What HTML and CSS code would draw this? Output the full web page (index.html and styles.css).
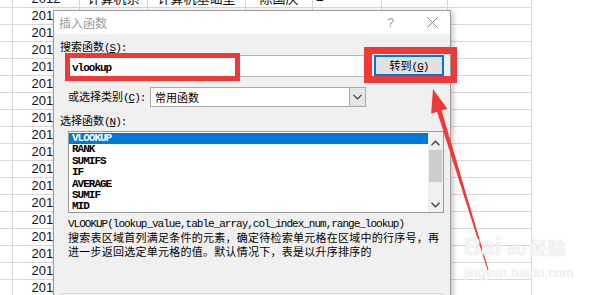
FILE: index.html
```html
<!DOCTYPE html>
<html lang="zh-CN">
<head>
<meta charset="UTF-8">
<title>插入函数</title>
<link rel="stylesheet" href="styles.css">
</head>
<body>

<div class="sheet">
    <div class="row"><span class="c0"></span><span class="c1">2012</span><span class="c2">计算机系</span><span class="c3">计算机基础室</span><span class="c4">陈国庆</span><span class="c5 left">=</span><span class="c6"></span><span class="c7"></span></div>
    <div class="row"><span class="c0"></span><span class="c1">2012</span><span class="c2"></span><span class="c3"></span><span class="c4"></span><span class="c5"></span><span class="c6"></span><span class="c7"></span></div>
    <div class="row"><span class="c0"></span><span class="c1">2012</span><span class="c2"></span><span class="c3"></span><span class="c4"></span><span class="c5"></span><span class="c6"></span><span class="c7"></span></div>
    <div class="row"><span class="c0"></span><span class="c1">2012</span><span class="c2"></span><span class="c3"></span><span class="c4"></span><span class="c5"></span><span class="c6"></span><span class="c7"></span></div>
    <div class="row"><span class="c0"></span><span class="c1">2012</span><span class="c2"></span><span class="c3"></span><span class="c4"></span><span class="c5"></span><span class="c6"></span><span class="c7"></span></div>
    <div class="row"><span class="c0"></span><span class="c1">2012</span><span class="c2"></span><span class="c3"></span><span class="c4"></span><span class="c5"></span><span class="c6"></span><span class="c7"></span></div>
    <div class="row"><span class="c0"></span><span class="c1">2012</span><span class="c2"></span><span class="c3"></span><span class="c4"></span><span class="c5"></span><span class="c6"></span><span class="c7"></span></div>
    <div class="row"><span class="c0"></span><span class="c1">2012</span><span class="c2"></span><span class="c3"></span><span class="c4"></span><span class="c5"></span><span class="c6"></span><span class="c7"></span></div>
    <div class="row"><span class="c0"></span><span class="c1">2012</span><span class="c2"></span><span class="c3"></span><span class="c4"></span><span class="c5"></span><span class="c6"></span><span class="c7"></span></div>
    <div class="row"><span class="c0"></span><span class="c1">2012</span><span class="c2"></span><span class="c3"></span><span class="c4"></span><span class="c5"></span><span class="c6"></span><span class="c7"></span></div>
    <div class="row"><span class="c0"></span><span class="c1">2012</span><span class="c2"></span><span class="c3"></span><span class="c4"></span><span class="c5"></span><span class="c6"></span><span class="c7"></span></div>
    <div class="row"><span class="c0"></span><span class="c1">2012</span><span class="c2"></span><span class="c3"></span><span class="c4"></span><span class="c5"></span><span class="c6"></span><span class="c7"></span></div>
    <div class="row"><span class="c0"></span><span class="c1">2012</span><span class="c2"></span><span class="c3"></span><span class="c4"></span><span class="c5"></span><span class="c6"></span><span class="c7"></span></div>
    <div class="row"><span class="c0"></span><span class="c1">2012</span><span class="c2"></span><span class="c3"></span><span class="c4"></span><span class="c5"></span><span class="c6"></span><span class="c7"></span></div>
    <div class="row"><span class="c0"></span><span class="c1">2012</span><span class="c2"></span><span class="c3"></span><span class="c4"></span><span class="c5"></span><span class="c6"></span><span class="c7"></span></div>
    <div class="row"><span class="c0"></span><span class="c1">2012</span><span class="c2"></span><span class="c3"></span><span class="c4"></span><span class="c5"></span><span class="c6"></span><span class="c7"></span></div>
    <div class="row"><span class="c0"></span><span class="c1">2012</span><span class="c2"></span><span class="c3"></span><span class="c4"></span><span class="c5"></span><span class="c6"></span><span class="c7"></span></div>
    <div class="row"><span class="c0"></span><span class="c1">2012</span><span class="c2"></span><span class="c3"></span><span class="c4"></span><span class="c5"></span><span class="c6"></span><span class="c7"></span></div>
</div>

<!-- dialog floats over the sheet -->
<div class="dialog">
    <div class="titlebar">
        <span class="title">插入函数</span>
        <span class="help">?</span>
        <svg class="close" width="11" height="11" viewBox="0 0 11 11">
            <path d="M0.5 0.5 L10.5 10.5 M10.5 0.5 L0.5 10.5" stroke="#8a8a8a" stroke-width="1" fill="none"/>
        </svg>
    </div>

    <div class="dlg-body">
        <div class="lbl">搜索函数<span class="mono">(<u>S</u>):</span></div>

        <div class="search-row">
            <div class="search"><span class="mono">vlookup</span></div>
            <div class="go">转到<span class="mono">(<u>G</u>)</span></div>
        </div>

        <div class="cat-row">
            <span class="cat-lbl">或选择类别<span class="mono">(<u>C</u>):</span></span>
            <div class="select">
                <span class="sel-text">常用函数</span>
                <span class="drop">
                    <svg width="9" height="6" viewBox="0 0 9 6"><path d="M0.5 0.8 L4.5 4.8 L8.5 0.8" stroke="#333" stroke-width="1.2" fill="none"/></svg>
                </span>
            </div>
        </div>

        <div class="lbl lbl-list">选择函数<span class="mono">(<u>N</u>):</span></div>

        <div class="fn-list">
            <ul class="items">
                <li class="sel">VLOOKUP</li>
                <li>RANK</li>
                <li>SUMIFS</li>
                <li>IF</li>
                <li>AVERAGE</li>
                <li>SUMIF</li>
                <li>MID</li>
            </ul>
            <div class="scroll">
                <svg class="arr" width="9" height="6" viewBox="0 0 9 6"><path d="M0.5 5.2 L4.5 1.2 L8.5 5.2" stroke="#444" stroke-width="1.4" fill="none"/></svg>
                <div class="thumb"></div>
                <svg class="arr arr-down" width="9" height="6" viewBox="0 0 9 6"><path d="M0.5 0.8 L4.5 4.8 L8.5 0.8" stroke="#444" stroke-width="1.4" fill="none"/></svg>
            </div>
        </div>

        <p class="sig mono">VLOOKUP(lookup_value,table_array,col_index_num,range_lookup)</p>
        <p class="desc">搜索表区域首列满足条件的元素，确定待检索单元格在区域中的行序号，再<br>进一步返回选定单元格的值。默认情况下，表是以升序排序的</p>
    </div>
    <div class="dlg-line"></div>
</div>

<!-- annotations -->
<div class="mark mark-search"></div>
<div class="mark mark-go"></div>

<svg class="arrow" width="607" height="295" viewBox="0 0 607 295">
    <polygon fill="#f03838" points="433,89 447.5,109 441.6,110.6 488.6,270 487.6,270.2 437.2,111.9 431.2,113.6"/>
</svg>

<div class="watermark">
    <div class="wm-logo"><span>Bai</span><span class="paw">du</span><span class="wm-cn">经验</span></div>
    <div class="wm-url">jingyan.baidu.com</div>
</div>

</body>
</html>
```

FILE: styles.css
```css
body {
    margin: 0;
    width: 607px;
    height: 295px;
    overflow: hidden;
    position: relative;
    background-color: #ffffff;
    font-family: "Liberation Sans", "Noto Sans CJK SC", sans-serif;
}

/* spreadsheet behind the dialog */
.sheet {
    margin-top: -9px;
}

.row {
    display: grid;
    grid-template-columns: 13px 67px 68px 98px 67px 69px 66px 84px;
    height: 17px;
}

.row span {
    box-sizing: border-box;
    height: 17px;
    border-right: 1px solid #d9d9d9;
    border-bottom: 1px solid #d9d9d9;
    font-size: 13px;
    line-height: 16px;
    text-align: center;
    color: #111;
    white-space: nowrap;
    overflow: hidden;
}

.row .left {
    text-align: left;
    padding-left: 3px;
}

/* insert function dialog */
.dialog {
    position: absolute;
    left: 53px;
    top: 10px;
    width: 398px;
    height: 300px;
    box-sizing: border-box;
    border: 1px solid #9a9a9a;
    background-color: #f0f0f0;
    box-shadow: 2px 2px 6px rgba(0, 0, 0, 0.25);
    font-family: "Noto Sans CJK SC", sans-serif;
    font-size: 11px;
    line-height: 14px;
    color: #000;
}

.titlebar {
    height: 23px;
    background-color: #ffffff;
    display: flex;
    align-items: center;
    padding-left: 5px;
}

.title {
    color: #9a9a9a;
    font-size: 12px;
    flex: 1;
}

.help {
    color: #9a9a9a;
    font-family: "Liberation Sans", sans-serif;
    font-size: 12px;
    margin-right: 33px;
}

.close {
    margin-right: 12px;
}

.dlg-body {
    padding: 5px 0 0 6px;
}

.mono {
    font-family: "Liberation Mono", monospace;
    letter-spacing: -1px;
}

.lbl {
    height: 14px;
}

.search-row {
    display: flex;
    align-items: flex-start;
    margin-top: 2px;
    padding-left: 8px;
}

.search {
    width: 298px;
    height: 22px;
    box-sizing: border-box;
    background-color: #ffffff;
    border: 1px solid #b8b8b8;
    padding-left: 3px;
    line-height: 20px;
    font-size: 11px;
    font-weight: bold;
}

.go {
    margin-left: 8px;
    width: 70px;
    height: 21px;
    box-sizing: border-box;
    border: 2px solid #0078d7;
    background-color: #e1e1e1;
    text-align: center;
    line-height: 17px;
}

.cat-row {
    display: flex;
    align-items: center;
    height: 20px;
    margin-top: 10px;
    padding-left: 8px;
}

.cat-lbl {
    width: 82px;
}

.select {
    display: flex;
    width: 216px;
    height: 20px;
    box-sizing: border-box;
    border: 1px solid #a9a9a9;
    background-color: #ffffff;
}

.sel-text {
    flex: 1;
    padding-left: 4px;
    line-height: 18px;
}

.drop {
    width: 15px;
    background-color: #e6e6e6;
    border-left: 1px solid #a9a9a9;
    display: flex;
    align-items: center;
    justify-content: center;
}

.lbl-list {
    margin-top: 6px;
}

.fn-list {
    display: flex;
    margin: 4px 0 0 8px;
    width: 376px;
    height: 82px;
    box-sizing: border-box;
    border: 1px solid #9a9a9a;
    background-color: #ffffff;
}

.items {
    flex: 1;
    list-style: none;
    margin: 0;
    padding: 1px 0 0 0;
    font-family: "Liberation Mono", monospace;
    font-weight: bold;
    font-size: 11px;
    letter-spacing: -1px;
}

.items li {
    height: 11.4px;
    line-height: 11.4px;
    padding-left: 3px;
}

.items .sel {
    background-color: #0078d7;
    color: #ffffff;
}

.scroll {
    width: 15px;
    background-color: #f0f0f0;
    display: flex;
    flex-direction: column;
    align-items: center;
}

.arr {
    margin-top: 8px;
}

.thumb {
    width: 13px;
    height: 32px;
    margin-top: 4px;
    background-color: #cdcdcd;
}

.arr-down {
    margin-top: auto;
    margin-bottom: 4px;
}

.sig {
    margin: 5px 0 0 8px;
    font-size: 11px;
    line-height: 12px;
    white-space: nowrap;
}

.desc {
    margin: 0 0 0 8px;
    line-height: 14px;
    letter-spacing: 0.25px;
    white-space: nowrap;
}

.dlg-line {
    position: absolute;
    left: 6px;
    right: 6px;
    top: 282px;
    border-top: 1px solid #d8d8d8;
}

/* red annotation boxes */
.mark {
    position: absolute;
    box-sizing: border-box;
    border-color: #f03838;
    border-style: solid;
}

.mark-search {
    left: 65px;
    top: 53px;
    width: 175px;
    height: 28px;
    border-width: 5px;
}

.mark-go {
    left: 364px;
    top: 47px;
    width: 93px;
    height: 36px;
    border-width: 7px 6px 7px 8px;
}

.arrow {
    position: absolute;
    left: 0;
    top: 0;
}

.watermark {
    position: absolute;
    left: 464px;
    top: 232px;
    color: #f5f5f5;
    text-shadow: 0 0 1px #d4d4d4;
    font-family: "Liberation Sans", "Noto Sans CJK SC", sans-serif;
}

.wm-logo {
    font-size: 24px;
    font-weight: bold;
    line-height: 30px;
}

.paw {
    font-size: 15px;
    margin-left: 6px;
}

.wm-cn {
    font-size: 18px;
    margin-left: 4px;
}

.wm-url {
    font-size: 13px;
    line-height: 16px;
    letter-spacing: 0.3px;
}
```
